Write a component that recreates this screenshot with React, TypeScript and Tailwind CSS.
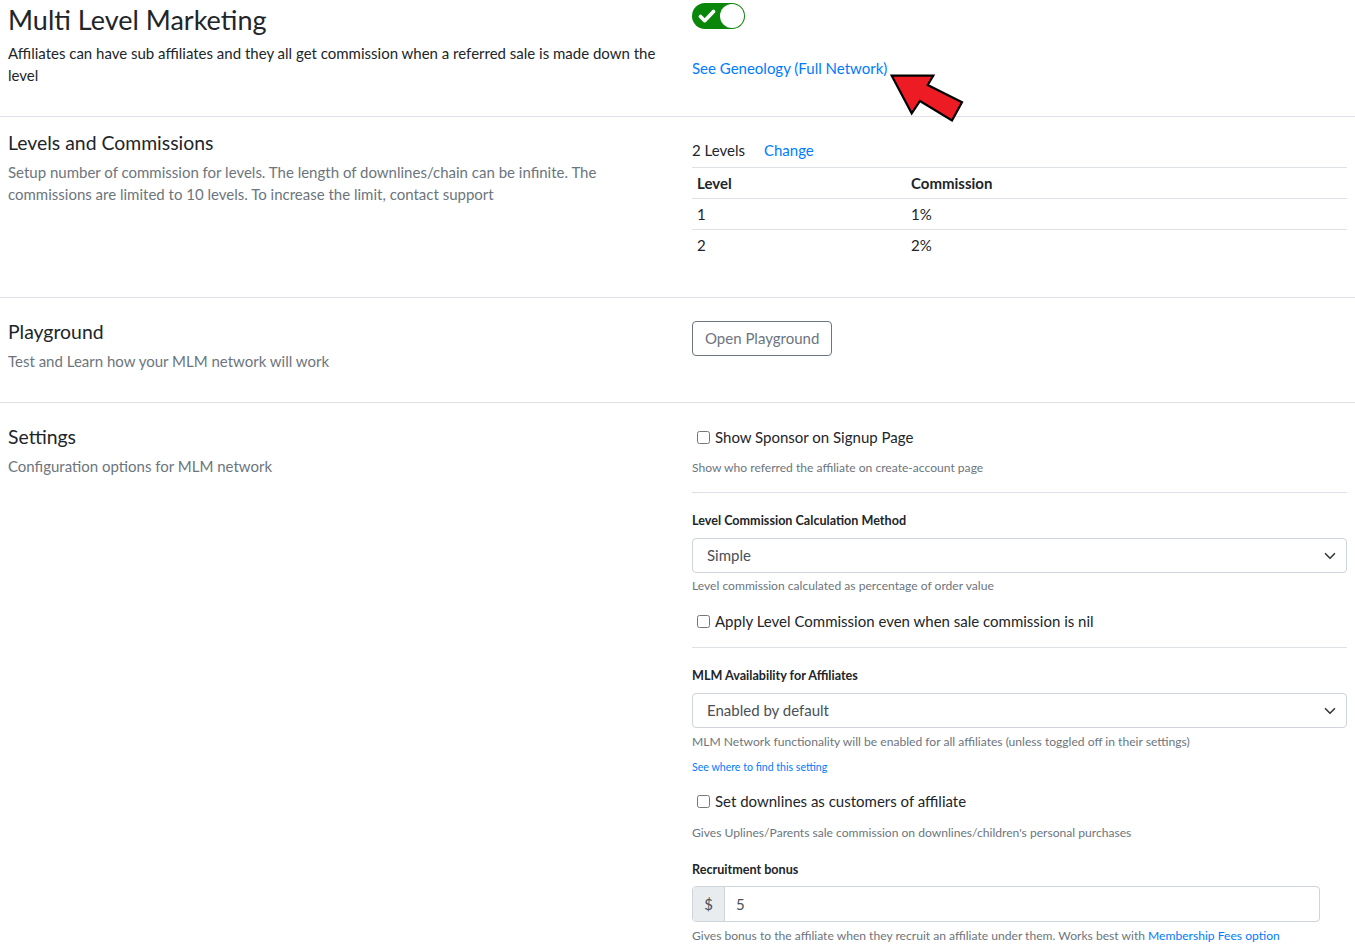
import React from "react";

const Chevron = () => (
  <svg width="12" height="12" viewBox="0 0 16 16" className="absolute right-[10px] top-1/2 -translate-y-1/2">
    <path d="M2 5l6 6 6-6" fill="none" stroke="#343a40" strokeWidth="2.2" strokeLinecap="round" strokeLinejoin="round" />
  </svg>
);

const Select = ({ value }: { value: string }) => (
  <div className="relative h-[35px] w-full rounded-[4px] border border-[#ced4da] bg-white flex items-center pl-[14px] text-[15px] text-[#495057]">
    {value}
    <Chevron />
  </div>
);

const Check = ({ label }: { label: string }) => (
  <label className="flex items-center h-[22px] text-[15px] text-[#212529]">
    <input type="checkbox" className="ml-[5px] mr-[5px] w-[13px] h-[13px] m-0" />
    {label}
  </label>
);

const Help = ({ children, className = "" }: { children: React.ReactNode; className?: string }) => (
  <div className={"text-[12.1px] leading-[17px] text-[#6c757d] " + className}>{children}</div>
);

const Label = ({ children, className = "" }: { children: React.ReactNode; className?: string }) => (
  <div className={"text-[12.6px] leading-[17px] font-bold text-[#212529] " + className}>{children}</div>
);

export default function App() {
  return (
    <div className="relative w-[1355px] h-[946px] overflow-hidden bg-white font-[Lato,sans-serif] text-[#212529]">
      {/* Section 1 */}
      <div className="flex border-b border-[#dee2e6] h-[117px]">
        <div className="w-[684px] px-2">
          <h1 className="text-[27px] leading-[30px] font-normal mt-[5px]">Multi Level Marketing</h1>
          <p className="text-[15px] leading-[22px] mt-[7px]">
            Affiliates can have sub affiliates and they all get commission when a referred sale is made down the level
          </p>
        </div>
        <div className="flex-1 px-2">
          <div className="mt-[3px] w-[53px] h-[26px] rounded-full bg-[#0a870a] flex items-center justify-between pl-[6px] pr-[1px]">
            <svg width="18" height="16" viewBox="0 0 18 16">
              <path d="M2.5 8.5l4.2 4.2L15.5 3.5" fill="none" stroke="white" strokeWidth="3.6" strokeLinecap="round" strokeLinejoin="round" />
            </svg>
            <div className="w-[24px] h-[24px] rounded-full bg-white"></div>
          </div>
          <a className="block mt-[28px] text-[15px] leading-[22px] text-[#007bff]">See Geneology (Full Network)</a>
        </div>
      </div>

      {/* Section 2 */}
      <div className="flex border-b border-[#dee2e6] h-[181px]">
        <div className="w-[684px] px-2">
          <h2 className="text-[19.4px] leading-[23px] font-normal mt-[14px]">Levels and Commissions</h2>
          <p className="text-[15px] leading-[22px] text-[#6c757d] mt-[7px]">
            Setup number of commission for levels. The length of downlines/chain can be infinite. The commissions are limited to 10 levels. To increase the limit, contact support
          </p>
        </div>
        <div className="flex-1 px-2">
          <div className="mt-[22px] flex text-[15px] leading-[22px]">
            <span>2 Levels</span>
            <a className="ml-[19px] text-[#007bff]">Change</a>
          </div>
          <table className="mt-[6px] w-full text-[15px] border-collapse">
            <thead>
              <tr className="border-t border-b border-[#dee2e6] h-[31px]">
                <th className="w-[213px] text-left font-bold pl-[5px]">Level</th>
                <th className="text-left font-bold pl-[6px]">Commission</th>
              </tr>
            </thead>
            <tbody>
              <tr className="border-b border-[#dee2e6] h-[31px]">
                <td className="pl-[5px]">1</td>
                <td className="pl-[6px]">1%</td>
              </tr>
              <tr className="h-[31px]">
                <td className="pl-[5px]">2</td>
                <td className="pl-[6px]">2%</td>
              </tr>
            </tbody>
          </table>
        </div>
      </div>

      {/* Section 3 */}
      <div className="flex border-b border-[#dee2e6] h-[105px]">
        <div className="w-[684px] px-2">
          <h2 className="text-[19.4px] leading-[23px] font-normal mt-[22px]">Playground</h2>
          <p className="text-[15px] leading-[22px] text-[#6c757d] mt-[7px]">Test and Learn how your MLM network will work</p>
        </div>
        <div className="flex-1 px-2">
          <button className="mt-[23px] h-[35px] px-[12px] rounded-[4px] border border-[#6c757d] text-[15px] text-[#6c757d] bg-white">
            Open Playground
          </button>
        </div>
      </div>

      {/* Section 4 */}
      <div className="flex">
        <div className="w-[684px] px-2">
          <h2 className="text-[19.4px] leading-[23px] font-normal mt-[22px]">Settings</h2>
          <p className="text-[15px] leading-[22px] text-[#6c757d] mt-[7px]">Configuration options for MLM network</p>
        </div>
        <div className="flex-1 px-2">
          <div className="mt-[23px]">
            <Check label="Show Sponsor on Signup Page" />
          </div>
          <Help className="mt-[11px]">Show who referred the affiliate on create-account page</Help>
          <div className="mt-[16px] border-t border-[#dee2e6]"></div>
          <Label className="mt-[19px]">Level Commission Calculation Method</Label>
          <div className="mt-[9px]">
            <Select value="Simple" />
          </div>
          <Help className="mt-[4px]">Level commission calculated as percentage of order value</Help>
          <div className="mt-[16px]">
            <Check label="Apply Level Commission even when sale commission is nil" />
          </div>
          <div className="mt-[15px] border-t border-[#dee2e6]"></div>
          <Label className="mt-[19px]">MLM Availability for Affiliates</Label>
          <div className="mt-[9px]">
            <Select value="Enabled by default" />
          </div>
          <Help className="mt-[5px]">MLM Network functionality will be enabled for all affiliates (unless toggled off in their settings)</Help>
          <a className="block mt-[9px] text-[10.6px] leading-[16px] text-[#007bff]">See where to find this setting</a>
          <div className="mt-[15px]">
            <Check label="Set downlines as customers of affiliate" />
          </div>
          <Help className="mt-[12px]">Gives Uplines/Parents sale commission on downlines/children's personal purchases</Help>
          <Label className="mt-[20px]">Recruitment bonus</Label>
          <div className="mt-[8px] flex h-[36px] w-[628px] rounded-[4px] border border-[#ced4da] overflow-hidden text-[15px]">
            <div className="w-[32px] bg-[#e9ecef] border-r border-[#ced4da] flex items-center justify-center text-[#495057]">$</div>
            <div className="flex items-center pl-[11px] text-[#495057]">5</div>
          </div>
          <Help className="mt-[5px]">
            Gives bonus to the affiliate when they recruit an affiliate under them. Works best with{" "}
            <a className="text-[#007bff]">Membership Fees option</a>
          </Help>
        </div>
      </div>

      {/* Red arrow overlay */}
      <svg className="absolute left-[880px] top-[65px]" width="95" height="65" viewBox="0 0 95 65">
        <polygon
          points="11.7,10.7 53.3,10.7 47.7,20 82,37.3 72,55.5 40,36 31.7,48.3"
          fill="#ed1c24"
          stroke="#000"
          strokeWidth="2.2"
          strokeLinejoin="miter"
        />
      </svg>
    </div>
  );
}
